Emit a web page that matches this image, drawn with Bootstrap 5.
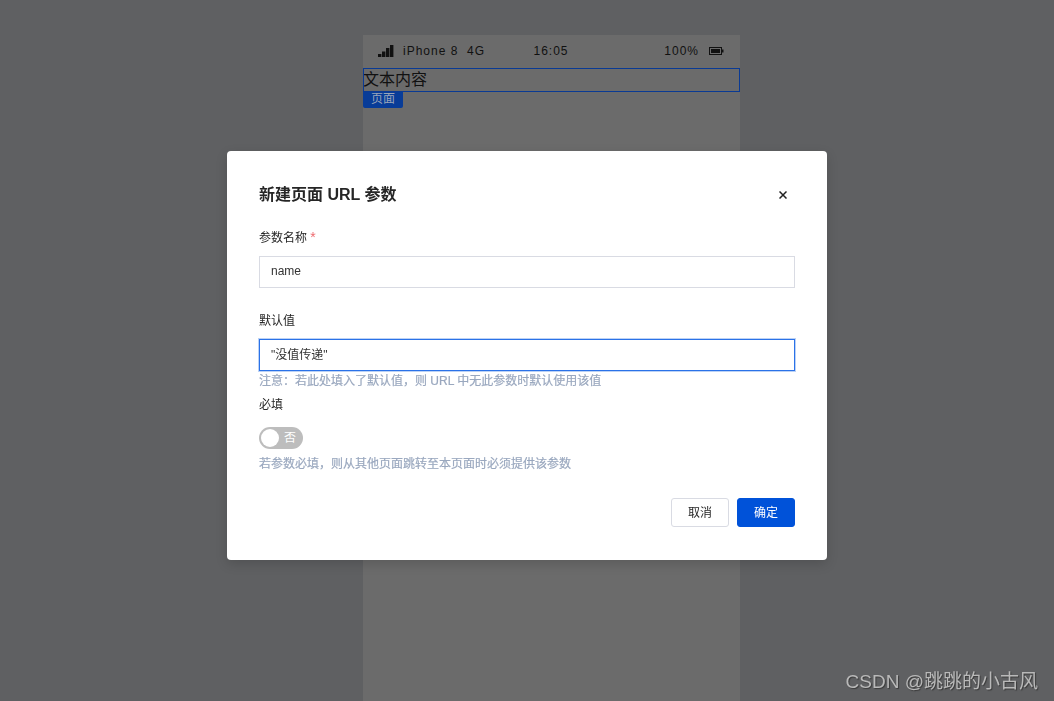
<!DOCTYPE html>
<html lang="zh">
<head>
<meta charset="utf-8">
<title>新建页面 URL 参数</title>
<link href="https://cdn.jsdelivr.net/npm/bootstrap@5.3.0/dist/css/bootstrap.min.css" rel="stylesheet">
<style>
html,body{height:100%;}
body{background:#5f6062;font-family:"Liberation Sans","Noto Sans CJK SC",sans-serif;overflow:hidden;color:#212529;}
.stage{padding:35px 0 0 363px;height:701px;}
.phone{width:377px;height:666px;background:#6b6b6b;color:#0c0c0c;}
.statusbar{height:33px;padding:0 16px 2px 15px;font-size:12px;letter-spacing:1px;color:#111;}
.statusbar .cell-l{width:150px;}
.signal{width:16px;height:12px;margin-right:9px;}
.battery{width:15px;height:8px;margin-left:10px;}
.textbox{height:24px;outline:1px solid #0a3a94;outline-offset:-1px;padding-top:1px;font-size:16px;line-height:21px;color:#111;}
.pagetag{width:40px;height:16px;background:#083c98;color:#9aa5b8;font-size:12px;line-height:15px;border-radius:0 0 2px 2px;text-align:center;}
.overlay{inset:0;}
.dlg{width:600px;height:409px;margin:151px auto 0;border:0;border-radius:4px;padding:32px;background:#fff;box-shadow:0 4px 12px rgba(0,0,0,.15);}
.dlg-head{height:24px;margin-bottom:22px;}
.dlg-title{font-size:16px;font-weight:700;line-height:24px;color:#262626;margin:0;}
.xbtn{width:16px;height:16px;padding:0;border:0;background:none;margin-right:4px;}
.fld-label{font-size:12px;line-height:18px;color:#262626;margin:0 0 9px;display:block;}
.fld-label.lab-sw{margin-bottom:13px;}
.req{color:#ee6a6f;font-size:14px;line-height:14px;}
.fld-input{height:32px;border:1px solid #d9dbe3;border-radius:0;font-size:12px;padding:0 11px 3px;color:#333;box-shadow:none;}
.fld-input:focus{border-color:#d9dbe3;box-shadow:none;}
.fld-active,.fld-active:focus{border-color:#2b72e8;box-shadow:0 0 0 1px #bcd2f5;}
.gap-a{margin-bottom:24px;}
.hint{font-size:12px;line-height:18px;color:#9aa8bf;font-weight:400;-webkit-text-stroke:.2px #9aa8bf;}
.hint-a{margin-top:1px;margin-bottom:6px;}
.sw{width:44px;height:22px;border-radius:11px;background:#bdbdbd;color:#fff;font-size:12px;line-height:22px;padding:0 7px 0 0;margin-bottom:6px;}
.sw-knob{width:18px;height:18px;background:#fff;border-radius:50%;left:2px;top:2px;}
.foot{margin-top:25px;gap:8px;}
.btn-c,.btn-o{width:58px;height:29px;font-size:12px;line-height:25px;padding:1px 0 0;border-radius:3px;}
.btn-c{background:#fff;border:1px solid #d9dbe3;color:#262626;}
.btn-o{background:#0052d9;border:1px solid #0052d9;color:#fff;}
.wm{right:16px;bottom:6px;font-size:19px;line-height:26px;color:#b9b9b9;text-shadow:1px 1px 1px #3a3a3a;}
</style>
</head>
<body>
<div class="stage d-flex">
  <div class="phone">
    <div class="statusbar d-flex align-items-center justify-content-between">
      <div class="cell-l d-flex align-items-center">
        <svg class="signal" viewBox="0 0 16 12"><rect x="0" y="9" width="3.4" height="3" fill="#111"/><rect x="4" y="6.5" width="3.4" height="5.5" fill="#111"/><rect x="8" y="3" width="3.4" height="9" fill="#111"/><rect x="12" y="0" width="3.4" height="12" fill="#111"/></svg>
        <span class="text-nowrap">iPhone 8&nbsp; 4G</span>
      </div>
      <span>16:05</span>
      <div class="d-flex align-items-center justify-content-end cell-l">
        <span>100%</span>
        <svg class="battery" viewBox="0 0 15 8"><rect x=".5" y=".5" width="12" height="7" fill="none" stroke="#111"/><rect x="2" y="2" width="9" height="4" fill="#111"/><rect x="13" y="2.5" width="1.5" height="3" fill="#111"/></svg>
      </div>
    </div>
    <div class="textbox">文本内容</div>
    <div class="pagetag">页面</div>
  </div>
</div>

<div class="overlay position-fixed">
  <div class="modal-content dlg">
    <div class="dlg-head d-flex justify-content-between align-items-center">
      <h5 class="dlg-title">新建页面 URL 参数</h5>
      <button type="button" class="xbtn d-flex align-items-center justify-content-center" aria-label="关闭">
        <svg width="8" height="8" viewBox="0 0 8 8"><path d="M.5 .5L7.5 7.5M7.5 .5L.5 7.5" stroke="#222" stroke-width="1.5" fill="none"/></svg>
      </button>
    </div>
    <form>
      <label class="fld-label">参数名称 <span class="req">*</span></label>
      <input class="form-control fld-input gap-a" value="name">
      <label class="fld-label">默认值</label>
      <input class="form-control fld-input fld-active" value="&quot;没值传递&quot;">
      <div class="hint hint-a">注意：若此处填入了默认值，则 URL 中无此参数时默认使用该值</div>
      <label class="fld-label lab-sw">必填</label>
      <div class="sw position-relative text-end">否<span class="sw-knob position-absolute"></span></div>
      <div class="hint">若参数必填，则从其他页面跳转至本页面时必须提供该参数</div>
      <div class="foot d-flex justify-content-end">
        <button type="button" class="btn btn-c">取消</button>
        <button type="button" class="btn btn-o">确定</button>
      </div>
    </form>
  </div>
</div>
<div class="wm position-fixed">CSDN @跳跳的小古风</div>
<script src="https://cdn.jsdelivr.net/npm/bootstrap@5.3.0/dist/js/bootstrap.bundle.min.js"></script>
</body>
</html>
